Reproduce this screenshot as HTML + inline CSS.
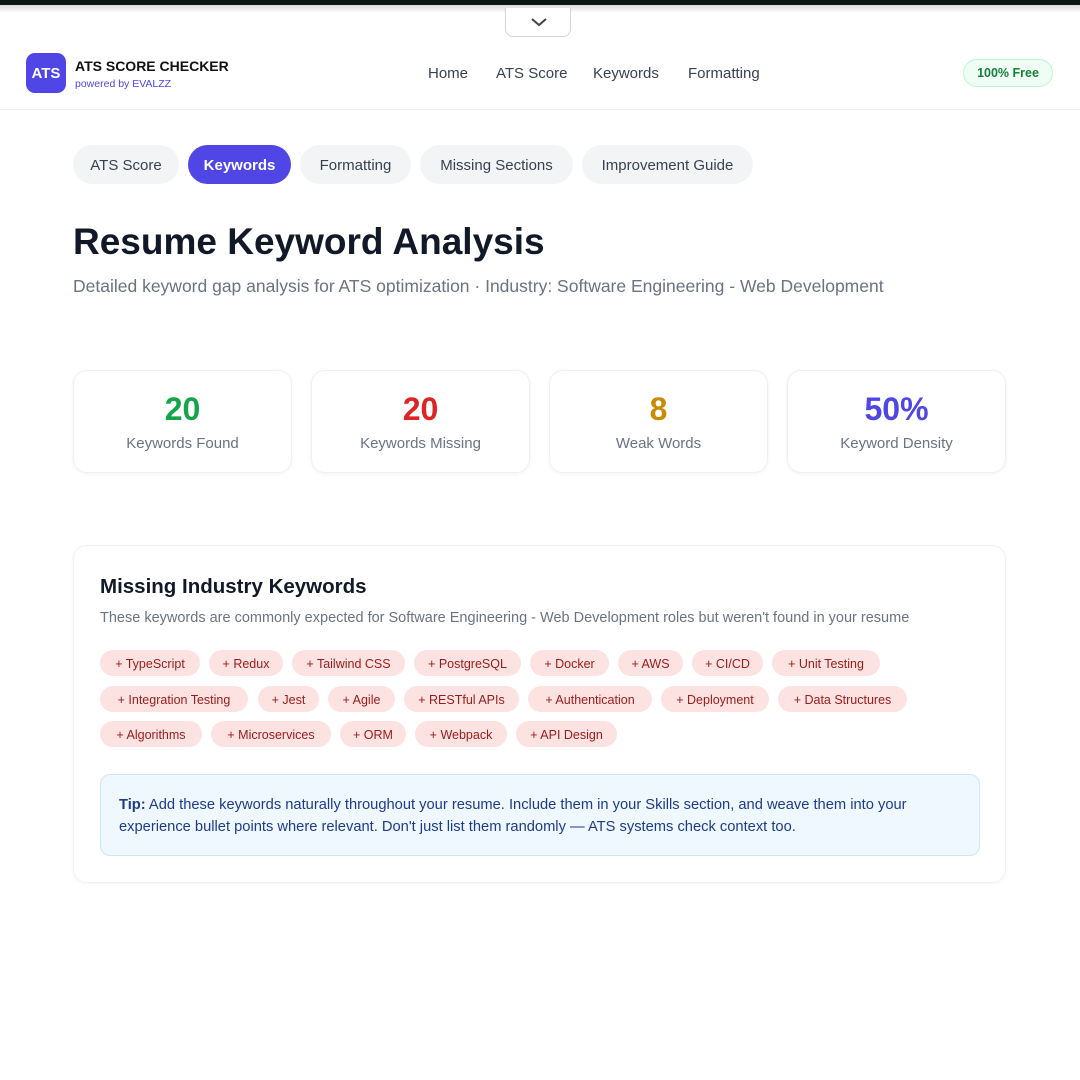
<!DOCTYPE html>
<html><head><meta charset="utf-8"><style>
*{box-sizing:border-box;margin:0;padding:0}
body{width:1080px;height:1080px;background:#fff;font-family:"Liberation Sans",Arial,sans-serif;position:relative;overflow:hidden;color:#111827}
.abs{position:absolute}
.topbar{left:0;top:0;width:1080px;height:5px;background:#0b1512}
.shade{left:0;top:5px;width:1080px;height:8px;background:linear-gradient(#d9d9d9,#fff)}
.pull{left:505px;top:8px;width:66px;height:29px;background:#fff;border:1px solid #d5d5d5;border-top:none;border-radius:0 0 8px 8px}
.header{left:0;top:40px;width:1080px;height:70px;border-bottom:1px solid #eef0f3}
.logo{left:26px;top:53px;width:40px;height:40px;border-radius:9px;background:#4f46e5;color:#fff;font-weight:bold;font-size:15px;display:flex;align-items:center;justify-content:center}
.nav a{position:absolute;top:65px;font-size:15px;color:#374151;text-decoration:none}
.free{left:963px;top:59px;width:90px;height:28px;border:1px solid #bbf7d0;background:#f0fdf4;border-radius:14px;color:#15803d;font-size:12.5px;font-weight:bold;display:flex;align-items:center;justify-content:center}
.tab{position:absolute;top:145px;height:39px;border-radius:20px;background:#f3f4f6;color:#374151;font-size:15px;display:flex;align-items:center;justify-content:center;padding-top:2px}
.tab.on{background:#4f46e5;color:#fff;font-weight:bold}
.stat{position:absolute;top:370px;width:219px;height:103px;border:1px solid #eef0f3;border-radius:14px;box-shadow:0 1px 4px rgba(0,0,0,.05);text-align:center}
.stat b{display:block;font-size:32px;margin-top:20px;line-height:36px}
.stat span{display:block;font-size:15px;color:#6b7280;margin-top:8px}
.card{left:73px;top:545px;width:933px;height:338px;border:1px solid #eef0f3;border-radius:14px;box-shadow:0 1px 4px rgba(0,0,0,.04)}
.tag{position:absolute;height:26px;border-radius:13px;background:#fde2e2;color:#991b1b;font-size:12.5px;display:flex;align-items:center;justify-content:center;white-space:nowrap;padding-top:1px}
.tip{left:100px;top:774px;width:880px;height:82px;background:#eff8ff;border:1px solid #cde7f8;border-radius:10px;padding:19px 18px;color:#1e3a8a;font-size:14.7px;line-height:22px}
</style></head><body>
<div class="abs topbar"></div><div class="abs shade"></div>
<div class="abs pull"><svg width="66" height="28"><path d="M26 11l7 6 7-6" fill="none" stroke="#444" stroke-width="2"/></svg></div>
<div class="abs header"></div>
<div class="abs logo">ATS</div>
<div class="abs" style="left:75px;top:58px;font-size:14px;font-weight:bold;color:#111">ATS SCORE CHECKER</div>
<div class="abs" style="left:75px;top:78px;font-size:10.5px;color:#4f46e5">powered by EVALZZ</div>
<div class="nav"><a style="left:428px">Home</a><a style="left:496px">ATS Score</a><a style="left:593px">Keywords</a><a style="left:688px">Formatting</a></div>
<div class="abs free">100% Free</div>
<div class="tab" style="left:73px;width:106px">ATS Score</div>
<div class="tab on" style="left:188px;width:103px">Keywords</div>
<div class="tab" style="left:300px;width:111px">Formatting</div>
<div class="tab" style="left:420px;width:153px">Missing Sections</div>
<div class="tab" style="left:582px;width:171px">Improvement Guide</div>
<div class="abs" style="left:73px;top:221px;font-size:37px;font-weight:bold;color:#111827">Resume Keyword Analysis</div>
<div class="abs" style="left:73px;top:276px;font-size:17.5px;color:#6b7280">Detailed keyword gap analysis for ATS optimization · Industry: Software Engineering - Web Development</div>
<div class="stat" style="left:73px"><b style="color:#16a34a">20</b><span>Keywords Found</span></div>
<div class="stat" style="left:311px"><b style="color:#dc2626">20</b><span>Keywords Missing</span></div>
<div class="stat" style="left:549px"><b style="color:#ca8a04">8</b><span>Weak Words</span></div>
<div class="stat" style="left:787px"><b style="color:#4f46e5">50%</b><span>Keyword Density</span></div>
<div class="abs card"></div>
<div class="abs" style="left:100px;top:575px;font-size:20.5px;font-weight:bold;color:#111827">Missing Industry Keywords</div>
<div class="abs" style="left:100px;top:610px;font-size:14.5px;color:#6b7280">These keywords are commonly expected for Software Engineering - Web Development roles but weren't found in your resume</div>
<div class="tag" style="left:100px;top:650px;width:100px">+ TypeScript</div>
<div class="tag" style="left:209px;top:650px;width:74px">+ Redux</div>
<div class="tag" style="left:292px;top:650px;width:113px">+ Tailwind CSS</div>
<div class="tag" style="left:414px;top:650px;width:107px">+ PostgreSQL</div>
<div class="tag" style="left:530px;top:650px;width:79px">+ Docker</div>
<div class="tag" style="left:618px;top:650px;width:65px">+ AWS</div>
<div class="tag" style="left:692px;top:650px;width:71px">+ CI/CD</div>
<div class="tag" style="left:772px;top:650px;width:108px">+ Unit Testing</div>
<div class="tag" style="left:100px;top:686px;width:148px">+ Integration Testing</div>
<div class="tag" style="left:258px;top:686px;width:61px">+ Jest</div>
<div class="tag" style="left:328px;top:686px;width:67px">+ Agile</div>
<div class="tag" style="left:404px;top:686px;width:115px">+ RESTful APIs</div>
<div class="tag" style="left:528px;top:686px;width:124px">+ Authentication</div>
<div class="tag" style="left:661px;top:686px;width:108px">+ Deployment</div>
<div class="tag" style="left:778px;top:686px;width:129px">+ Data Structures</div>
<div class="tag" style="left:100px;top:721px;width:102px">+ Algorithms</div>
<div class="tag" style="left:211px;top:721px;width:120px">+ Microservices</div>
<div class="tag" style="left:340px;top:721px;width:66px">+ ORM</div>
<div class="tag" style="left:415px;top:721px;width:92px">+ Webpack</div>
<div class="tag" style="left:516px;top:721px;width:101px">+ API Design</div>
<div class="abs tip"><b>Tip:</b> Add these keywords naturally throughout your resume. Include them in your Skills section, and weave them into your experience bullet points where relevant. Don't just list them randomly — ATS systems check context too.</div>
</body></html>
